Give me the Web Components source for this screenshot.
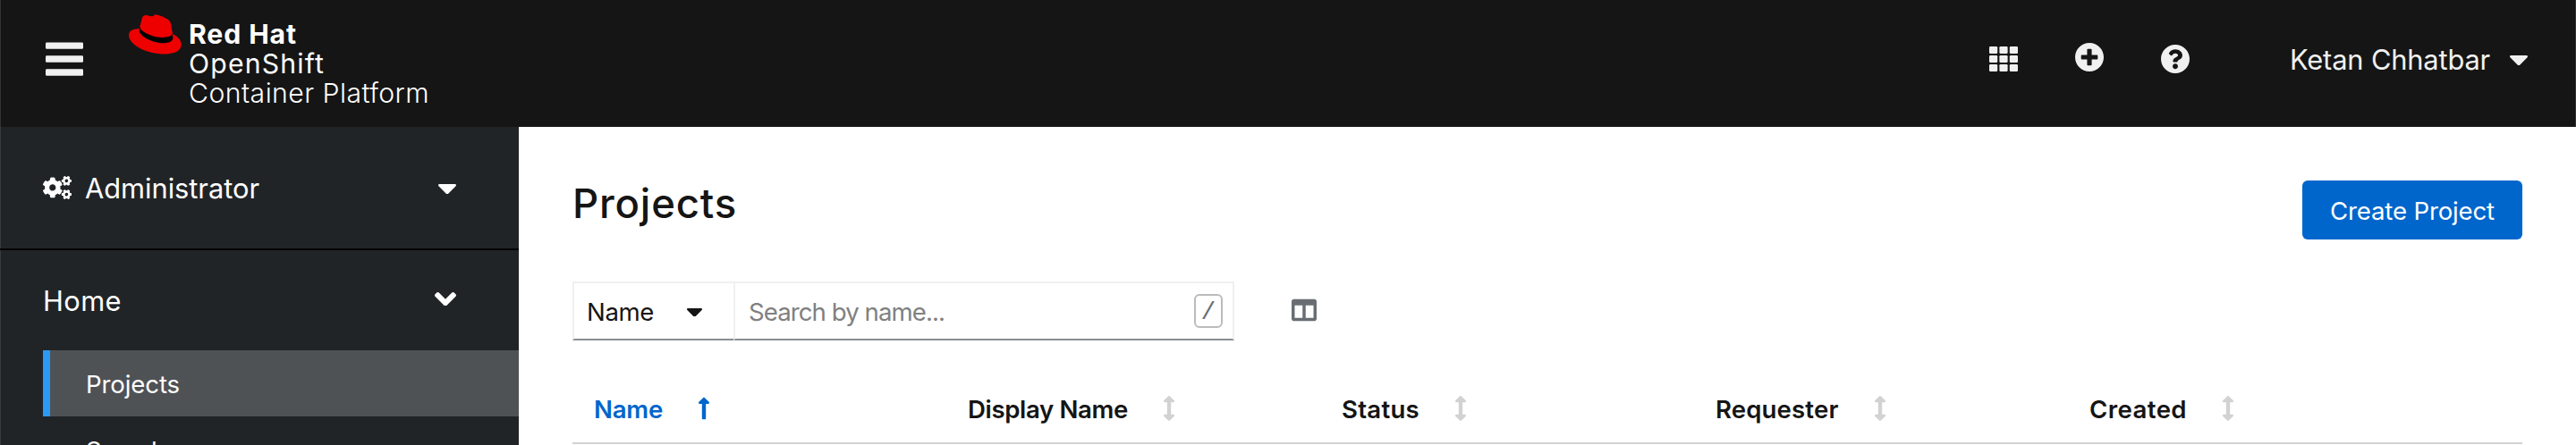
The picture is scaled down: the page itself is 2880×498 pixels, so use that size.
<!DOCTYPE html>
<html lang="en">
<head>
<meta charset="utf-8">
<title>Projects</title>
<style>
html,body{margin:0;padding:0}
body{width:2880px;height:498px;overflow:hidden;background:#fff;color:#151515;font-family:Inter,Lato,sans-serif;font-size:27.6px}
</style>
</head>
<body>
<console-app></console-app>
<script>
const define = (name, html, setup) => customElements.define(name, class extends HTMLElement {
  connectedCallback() {
    if (this.shadowRoot) return;
    const t = document.createElement('template');
    t.innerHTML = html;
    this.attachShadow({mode: 'open'}).appendChild(t.content.cloneNode(true));
    if (setup) setup(this, this.shadowRoot);
  }
});

/* A single line of text tracked to an exact width. */
customElements.define('fit-text', class extends HTMLElement {
  connectedCallback() {
    if (this.shadowRoot) return;
    this.attachShadow({mode: 'open'}).innerHTML =
      '<style>:host{display:block;white-space:nowrap;flex:none}span{display:inline-block;position:relative;top:1px}</style><span><slot></slot></span>';
    const span = this.shadowRoot.querySelector('span');
    const target = +this.getAttribute('width');
    const fit = () => {
      span.style.letterSpacing = '0px';
      const n = this.textContent.length;
      const ls = (target - span.getBoundingClientRect().width) / n;
      span.style.letterSpacing = ls.toFixed(3) + 'px';
      this.style.width = target + 'px';
    };
    requestAnimationFrame(fit);
    fit();
  }
});

const gear = 'M512.1 191l-8.2 14.3c-3 5.3-9.4 7.5-15.1 5.4-11.8-4.4-22.6-10.7-32.1-18.6-4.6-3.8-5.8-10.5-2.8-15.7l8.2-14.3c-6.9-8-12.3-17.3-15.9-27.4h-16.5c-6 0-11.2-4.3-12.2-10.3-2-12-2.1-24.6 0-37.1 1-6 6.2-10.4 12.2-10.4h16.5c3.6-10.1 9-19.4 15.9-27.4l-8.2-14.3c-3-5.2-1.9-11.9 2.8-15.7 9.5-7.9 20.4-14.2 32.1-18.6 5.7-2.1 12.1.1 15.1 5.4l8.2 14.3c10.5-1.9 21.2-1.9 31.7 0L552 6.3c3-5.3 9.4-7.5 15.1-5.4 11.8 4.4 22.6 10.7 32.1 18.6 4.6 3.8 5.8 10.5 2.8 15.7l-8.2 14.3c6.9 8 12.3 17.3 15.9 27.4h16.5c6 0 11.2 4.3 12.2 10.3 2 12 2.1 24.6 0 37.1-1 6-6.2 10.4-12.2 10.4h-16.5c-3.6 10.1-9 19.4-15.9 27.4l8.2 14.3c3 5.2 1.9 11.9-2.8 15.7-9.5 7.9-20.4 14.2-32.1 18.6-5.7 2.1-12.1-.1-15.1-5.4l-8.2-14.3c-10.4 1.9-21.2 1.9-31.7 0zm-10.5-58.8c38.5 29.6 82.4-14.3 52.8-52.8-38.5-29.7-82.4 14.3-52.8 52.8z';
const icons = {
  bars: ['0 0 42 38', '<rect y=".4" width="42" height="7.4" rx="1.3"/><rect y="15.2" width="42" height="7.6" rx="1.3"/><rect y="30.2" width="42" height="7.6" rx="1.3"/>'],
  grid: ['0 0 32 28', [0, 10, 20].map(y => [0, 11.4, 22.8].map(x => `<rect x="${x}" y="${y}" width="9.2" height="8" rx="1.2"/>`).join('')).join('')],
  plus: ['8 8 496 496', '<path d="M256 8C119 8 8 119 8 256s111 248 248 248 248-111 248-248S393 8 256 8zm144 276c0 6.6-5.4 12-12 12h-92v92c0 6.6-5.4 12-12 12h-56c-6.6 0-12-5.4-12-12v-92h-92c-6.6 0-12-5.4-12-12v-56c0-6.6 5.4-12 12-12h92v-92c0-6.6 5.4-12 12-12h56c6.6 0 12 5.4 12 12v92h92c6.6 0 12 5.4 12 12v56z"/>'],
  help: ['8 8 496 496', '<path d="M504 256c0 136.997-111.043 248-248 248S8 392.997 8 256C8 119.083 119.043 8 256 8s248 111.083 248 248zM262.655 90c-54.497 0-89.255 22.957-116.549 63.758-3.536 5.286-2.353 12.415 2.715 16.258l34.699 26.31c5.205 3.947 12.621 3.008 16.665-2.122 17.864-22.658 30.113-35.797 57.303-35.797 20.429 0 45.698 13.148 45.698 32.958 0 14.976-12.363 22.667-32.534 33.976C247.128 238.528 216 254.941 216 296v4c0 6.627 5.373 12 12 12h56c6.627 0 12-5.373 12-12v-1.333c0-28.462 83.186-29.647 83.186-106.667 0-58.002-60.165-102-116.531-102zM256 338c-25.365 0-46 20.635-46 46 0 25.364 20.635 46 46 46s46-20.636 46-46c0-25.365-20.635-46-46-46z"/>'],
  caret: ['11 192 298 169', '<path d="M31.3 192h257.3c17.8 0 26.7 21.5 14.1 34.1L174.1 354.7c-7.8 7.8-20.5 7.8-28.3 0L17.2 226.1C4.6 213.5 13.5 192 31.3 192z"/>'],
  chevron: ['0 152 320 208', '<path d="M143 352.3L7 216.3c-9.4-9.4-9.4-24.6 0-33.9l22.6-22.6c9.4-9.4 24.6-9.4 33.9 0l96.4 96.4 96.4-96.4c9.4-9.4 24.6-9.4 33.9 0l22.6 22.6c9.4 9.4 9.4 24.6 0 33.9l-136 136c-9.2 9.4-24.4 9.4-33.8 0z"/>'],
  cogs: ['0 0 640 512', `<path d="${gear}"/><path transform="translate(0 299)" d="${gear}"/><path d="M386.3 286.1l33.7 16.8c10.1 5.8 14.5 18.1 10.5 29.1-8.9 24.2-26.4 46.4-42.6 65.8-7.4 8.9-20.2 11.1-30.3 5.3l-29.1-16.8c-16 13.7-34.6 24.6-54.9 31.7v33.6c0 11.6-8.3 21.6-19.7 23.6-24.6 4.2-50.4 4.4-75.9 0-11.5-2-20-11.9-20-23.6V418c-20.3-7.2-38.9-18-54.9-31.7L74 403c-10 5.8-22.9 3.6-30.3-5.3-16.2-19.4-33.3-41.6-42.2-65.7-4-10.9.4-23.2 10.5-29.1l33.3-16.8c-3.9-20.9-3.9-42.4 0-63.4L12 205.8c-10.1-5.8-14.6-18.1-10.5-29 8.9-24.2 26-46.4 42.2-65.8 7.4-8.9 20.2-11.1 30.3-5.3l29.1 16.8c16-13.7 34.6-24.6 54.9-31.7V57.1c0-11.5 8.2-21.5 19.6-23.5 24.6-4.2 50.5-4.4 76-.1 11.5 2 20 11.9 20 23.6v33.6c20.3 7.2 38.9 18 54.9 31.7l29.1-16.8c10-5.8 22.9-3.6 30.3 5.3 16.2 19.4 33.2 41.6 42.1 65.8 4 10.9.1 23.2-10 29.1l-33.7 16.8c3.9 21 3.9 42.5 0 63.5zm-117.6 21.1c59.2-77-28.7-164.9-105.7-105.7-59.2 77 28.7 164.9 105.7 105.7z"/>`],
  columns: ['0 0 512 512', '<path d="M464 32H48C21.49 32 0 53.49 0 80v352c0 26.51 21.49 48 48 48h416c26.51 0 48-21.49 48-48V80c0-26.51-21.49-48-48-48zM224 416H64V160h160v256zm224 0H288V160h160v256z"/>'],
  up: ['0 0 256 512', '<path d="M88 166.059V468c0 6.627 5.373 12 12 12h56c6.627 0 12-5.373 12-12V166.059h46.059c21.382 0 32.09-25.851 16.971-40.971l-86.059-86.059c-9.373-9.373-24.569-9.373-33.941 0l-86.059 86.059c-15.119 15.119-4.411 40.971 16.971 40.971H88z"/>'],
  updown: ['0 0 256 512', '<path d="M214.059 377.941H168V134.059h46.059c21.382 0 32.09-25.851 16.971-40.971L144.971 7.029c-9.373-9.373-24.568-9.373-33.941 0L24.971 93.088c-15.119 15.119-4.411 40.971 16.971 40.971H88v243.882H41.941c-21.382 0-32.09 25.851-16.971 40.971l86.059 86.059c9.373 9.373 24.568 9.373 33.941 0l86.059-86.059c15.12-15.119 4.412-40.971-16.97-40.971z"/>'],
  fedora: ['42 47 178 134', '<path fill="#e00" d="M80 95C58 96 42 101 42 117C42 150 102 181 163 181C200 181 219 168 219 149C219 133 206 121 190 114L184 79Q182 69 174 64Q155 51 133 47.500Q128 48 124 53Q116 56 106 51Q94 47 88 56L79 90Z"/><path fill="#000" d="M79 89C81 104 118 124 154 125C173 125 186 121 188 112L191 126C191 138 177 144 157 144C118 143 76 118 77 101Z"/>']
};
define('ui-icon', '<style>:host{display:block;flex:none}svg{display:block;width:100%;height:100%;fill:currentColor}</style><svg preserveAspectRatio="none" aria-hidden="true"></svg>', (host, root) => {
  const [box, body] = icons[host.getAttribute('name')];
  const svg = root.querySelector('svg');
  svg.setAttribute('viewBox', box);
  svg.innerHTML = body;
  host.style.width = host.getAttribute('w') + 'px';
  host.style.height = host.getAttribute('h') + 'px';
});

define('brand-logo', `<style>
:host{display:flex;align-items:flex-start;color:#fff;font-size:30.2px;line-height:33px;height:132px}
.hat{margin:16px 8px 0 0}
.lines{padding-top:21px}
.b{font-weight:700}.l{font-weight:400}.t{font-weight:300}
</style>
<ui-icon class="hat" name="fedora" w="59" h="44.5"></ui-icon>
<div class="lines"><fit-text class="b" width="121">Red Hat</fit-text><fit-text class="l" width="152">OpenShift</fit-text><fit-text class="t" width="269">Container Platform</fit-text></div>`);

define('page-masthead', `<style>
:host{display:flex;align-items:center;box-sizing:border-box;height:142px;padding:0 54px 10px 51px;background:#151515;color:#f0f0f0;font-size:30.8px;line-height:40px;box-shadow:inset 1px 0 #333,inset -1px 0 #333}
brand-logo{margin-left:51px}
.tools{display:flex;align-items:center;gap:64px;margin-left:auto}
.plus{margin-bottom:4px}
.user{display:flex;align-items:center;gap:22px;margin-left:112px}
.user ui-icon{margin-top:3px}
</style>
<ui-icon name="bars" w="42" h="38"></ui-icon><brand-logo></brand-logo>
<div class="tools"><ui-icon name="grid" w="32" h="28"></ui-icon><ui-icon class="plus" name="plus" w="32" h="32"></ui-icon><ui-icon name="help" w="32" h="32"></ui-icon></div>
<div class="user"><fit-text width="224">Ketan Chhatbar</fit-text><ui-icon name="caret" w="20" h="11.300"></ui-icon></div>`);

define('nav-toggle', `<style>
:host{display:flex;align-items:center;justify-content:space-between;box-sizing:border-box;padding:0 70px 0 48px;font-size:30.8px;line-height:40px}
.label{display:flex;align-items:center}
</style><div class="label"><slot></slot></div><slot name="end"></slot>`);

define('nav-item', `<style>
:host{display:flex;align-items:center;box-sizing:border-box;height:74px;margin-left:48px;padding-left:40px;border-left:8px solid transparent;line-height:36px}
:host([current]){background:#4f5255;border-color:#2b9af3}
</style><slot></slot>`);

define('side-nav', `<style>
:host{display:block;overflow:hidden;background:#212427;color:#fff;box-shadow:inset 1px 0 #383b3e}
.persp{height:138px;border-bottom:2px solid #030303}
.home{height:112px}
.cogs{margin-right:15px}
.chev{margin-bottom:3px}
</style>
<nav-toggle class="persp"><ui-icon class="cogs" name="cogs" w="32" h="26"></ui-icon><fit-text width="195">Administrator</fit-text><ui-icon slot="end" style="margin-top:3px" name="caret" w="20" h="11.300"></ui-icon></nav-toggle>
<nav-toggle class="home"><fit-text width="88">Home</fit-text><ui-icon slot="end" class="chev" name="chevron" w="24" h="15.500"></ui-icon></nav-toggle>
<nav-item current><fit-text width="105">Projects</fit-text></nav-item>
<nav-item><fit-text width="89">Search</fit-text></nav-item>`);

define('action-button', `<style>
:host{display:flex;align-items:center;justify-content:center;width:246px;height:66px;border-radius:6px;background:#06c;color:#fff;line-height:36px}
</style><slot></slot>`);

define('filter-bar', `<style>
:host{display:flex;align-items:center;height:66px}
.cell{display:flex;align-items:center;box-sizing:border-box;height:66px;border:2px solid #f0f0f0;border-bottom-color:#8a8d90;line-height:36px}
.kind{width:180px;border-right:0;padding-left:14px}
.kind ui-icon{margin:3px 0 0 37px}
.query{width:560px;padding:0 11px 0 15px;color:#808080;justify-content:space-between}
kbd{display:flex;align-items:center;justify-content:center;box-sizing:border-box;width:32px;height:38px;border:2px solid #bbb;border-radius:6px;font:28px/34px "Liberation Mono",monospace;color:#6a6e73}
kbd span{padding-top:3px}
.cols{margin:0 0 2px 64px;color:#6a6e73}
</style>
<div class="cell kind"><fit-text width="75">Name</fit-text><ui-icon name="caret" w="17" h="9.800"></ui-icon></div>
<div class="cell query"><fit-text width="219">Search by name...</fit-text><kbd><span>/</span></kbd></div>
<ui-icon class="cols" name="columns" w="28" h="28"></ui-icon>`);

customElements.define('sort-header', class extends HTMLElement {
  connectedCallback() {
    if (this.shadowRoot) return;
    const icon = this.hasAttribute('active') ? 'up' : 'updown';
    this.attachShadow({mode: 'open'}).innerHTML = `<style>
:host{display:flex;align-items:center;padding-left:24px;font-weight:600;line-height:36px}
ui-icon{margin-left:39px;color:#d2d2d2}
:host([active]),:host([active]) ui-icon{color:#06c}
</style><fit-text width="${this.getAttribute('width')}">${this.getAttribute('label')}</fit-text><ui-icon name="${icon}" w="14" h="28"></ui-icon>`;
  }
});
customElements.define('projects-page', class extends HTMLElement {
  connectedCallback() {
    const cols = [['Name', 77, 'active'], ['Display Name', 179, ''], ['Status', 87, ''], ['Requester', 137.5, ''], ['Created', 109, '']];
    this.attachShadow({mode: 'open'}).innerHTML = `<style>
:host{display:block;background:#fff;padding:60px 60px 0}
.head{display:flex;justify-content:space-between;height:113px}
h1{margin:0;font-weight:500;font-size:45.5px;line-height:50px}
.thead{display:grid;grid-template-columns:repeat(4,418px) 1fr;height:76px;margin-top:38px;border-bottom:2px solid #d2d2d2}
</style>
<div class="head"><h1><fit-text width="184">Projects</fit-text></h1><action-button><fit-text width="184">Create Project</fit-text></action-button></div>
<filter-bar></filter-bar>
<div class="thead">${cols.map(c => `<sort-header label="${c[0]}" width="${c[1]}" ${c[2]}></sort-header>`).join('')}</div>`;
  }
});
define('console-app', `<style>
:host{display:grid;grid-template:142px 356px / 580px 1fr;width:2880px;height:498px;overflow:hidden}
page-masthead{grid-column:1 / 3}
</style><page-masthead></page-masthead><side-nav></side-nav><projects-page></projects-page>`);
</script>
</body>
</html>
